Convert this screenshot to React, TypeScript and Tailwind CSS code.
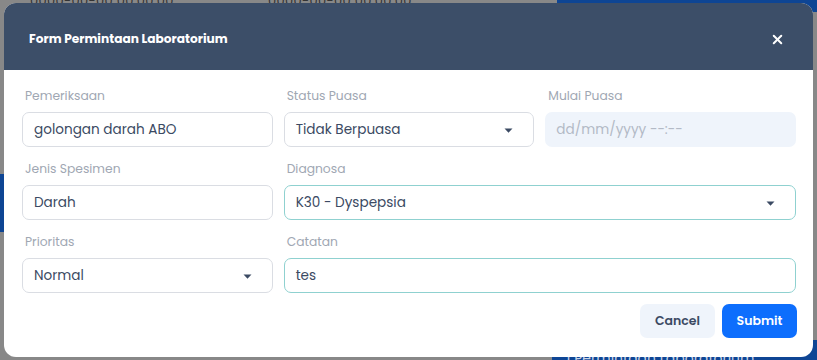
import React from "react";
import { X } from "lucide-react";

const font = { fontFamily: "Poppins, Inter, 'Open Sans', sans-serif" };

function Caret() {
  return (
    <svg width="9" height="5" viewBox="0 0 9 5" className="shrink-0">
      <path d="M0.5 0.5 H8.5 L4.5 4.8 Z" fill="#3b4a63" />
    </svg>
  );
}

function Label({ children }: { children: React.ReactNode }) {
  return (
    <div className="text-[12.3px] leading-[20px] text-[#a0a7b3] mb-[6px] pl-[3px]">{children}</div>
  );
}

function Field({
  label,
  value,
  select,
  teal,
  disabled,
  className,
}: {
  label: string;
  value: string;
  select?: boolean;
  teal?: boolean;
  disabled?: boolean;
  className?: string;
}) {
  return (
    <div className={className}>
      <Label>{label}</Label>
      <div
        className={
          "h-[35px] rounded-[7px] flex items-center justify-between pl-[11px] pr-[20px] pt-[2px] text-[13.6px] " +
          (disabled
            ? "bg-[#eff4fb] text-[#b3bac6]"
            : teal
            ? "border border-[#8fd1d0] bg-white text-[#3b4a63]"
            : "border border-[#dadde3] bg-white text-[#3b4a63]")
        }
      >
        <span>{value}</span>
        {select && <Caret />}
      </div>
    </div>
  );
}

export default function App() {
  return (
    <div className="relative w-[817px] h-[360px] overflow-hidden bg-[#888888]" style={font}>
      {/* dimmed page behind */}
      <div className="absolute left-[30px] top-[-9px] text-[13px] text-[#333] tracking-wide">0000-00-00 00:00:00</div>
      <div className="absolute left-[268px] top-[-9px] text-[13px] text-[#333] tracking-wide">0000-00-00 00:00:00</div>
      <div className="absolute left-[557px] top-0 w-[260px] h-[12px] bg-[#0e4594]" />
      <div className="absolute left-0 top-[174px] w-[6px] h-[58px] bg-[#0e4594]" />
      <div className="absolute left-[552px] top-[340px] w-[265px] h-[20px] bg-[#0e4594] text-[#c9d3e6] text-[14px] pl-[14px] pt-[8px] whitespace-nowrap">
        1 Permintaan Laboratorium
      </div>

      {/* modal */}
      <div className="absolute left-[4px] top-[3px] w-[809px] rounded-[12px] overflow-hidden bg-white">
        <div className="h-[67px] bg-[#3c4e68] flex items-center justify-between pl-[25px] pr-[28px] pt-[5px]">
          <div className="text-white text-[12.2px] font-bold">Form Permintaan Laboratorium</div>
          <X size={15} strokeWidth={3.2} color="#ffffff" />
        </div>
        <div className="pl-[18px] pr-[17px] pt-[16px] pb-[19px]">
          <div className="grid grid-cols-3 gap-x-[11px] gap-y-[12px]">
            <Field label="Pemeriksaan" value="golongan darah ABO" />
            <Field label="Status Puasa" value="Tidak Berpuasa" select />
            <Field label="Mulai Puasa" value="dd/mm/yyyy --:--" disabled />
            <Field label="Jenis Spesimen" value="Darah" />
            <Field label="Diagnosa" value="K30 - Dyspepsia" select teal className="col-span-2" />
            <Field label="Prioritas" value="Normal" select />
            <Field label="Catatan" value="tes" teal className="col-span-2" />
          </div>
          <div className="flex justify-end gap-[7px] mt-[11px] -mr-[1px]">
            <button className="w-[75px] h-[34px] rounded-[7px] bg-[#eff4fb] text-[#3b4a63] text-[12.5px] font-semibold">
              Cancel
            </button>
            <button className="w-[75px] h-[34px] rounded-[7px] bg-[#0d6efd] text-white text-[12.5px] font-semibold">
              Submit
            </button>
          </div>
        </div>
      </div>
    </div>
  );
}
